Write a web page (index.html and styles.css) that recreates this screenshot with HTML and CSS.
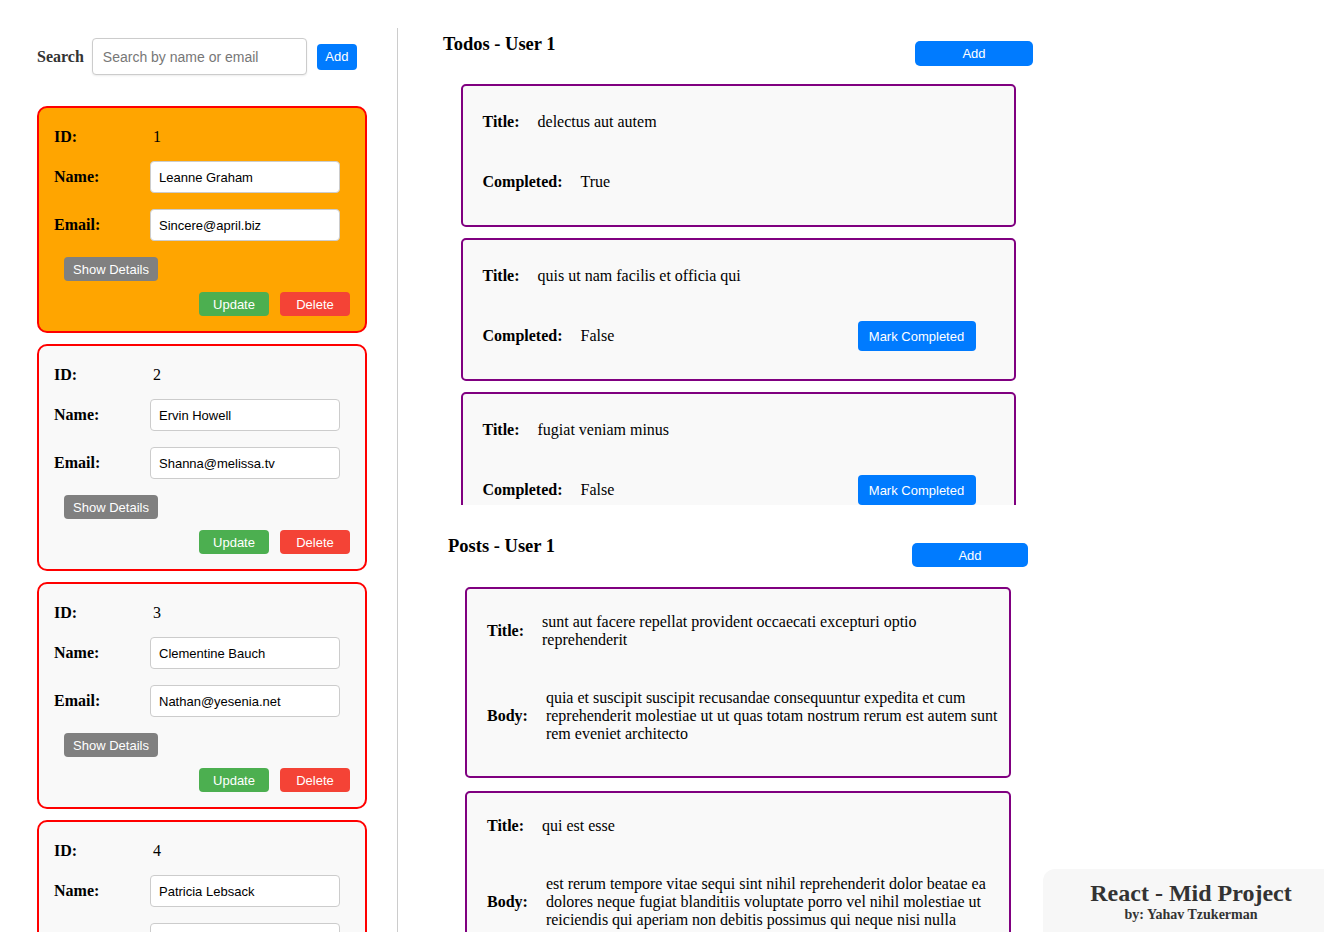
FILE: index.html
```html
<!DOCTYPE html>
<html lang="en">
<head>
<meta charset="utf-8">
<title>React - Mid Project</title>
<link rel="stylesheet" href="styles.css">
</head>
<body>
<div class="left">
  <div class="search-row">
    <span class="search-label">Search</span>
    <input class="search-input" type="text" placeholder="Search by name or email">
    <button class="btn btn-blue btn-add-small">Add</button>
  </div>
  <div class="users">
    <div class="user-card active">
      <div class="row row-id"><span class="lbl">ID:</span><span class="val">1</span></div>
      <div class="row row-field"><span class="lbl">Name:</span><input class="field" type="text" value="Leanne Graham"></div>
      <div class="row row-field"><span class="lbl">Email:</span><input class="field" type="text" value="Sincere@april.biz"></div>
      <button class="btn btn-gray btn-details">Show Details</button>
      <div class="actions"><button class="btn btn-green">Update</button><button class="btn btn-red">Delete</button></div>
    </div>
    <div class="user-card">
      <div class="row row-id"><span class="lbl">ID:</span><span class="val">2</span></div>
      <div class="row row-field"><span class="lbl">Name:</span><input class="field" type="text" value="Ervin Howell"></div>
      <div class="row row-field"><span class="lbl">Email:</span><input class="field" type="text" value="Shanna@melissa.tv"></div>
      <button class="btn btn-gray btn-details">Show Details</button>
      <div class="actions"><button class="btn btn-green">Update</button><button class="btn btn-red">Delete</button></div>
    </div>
    <div class="user-card">
      <div class="row row-id"><span class="lbl">ID:</span><span class="val">3</span></div>
      <div class="row row-field"><span class="lbl">Name:</span><input class="field" type="text" value="Clementine Bauch"></div>
      <div class="row row-field"><span class="lbl">Email:</span><input class="field" type="text" value="Nathan@yesenia.net"></div>
      <button class="btn btn-gray btn-details">Show Details</button>
      <div class="actions"><button class="btn btn-green">Update</button><button class="btn btn-red">Delete</button></div>
    </div>
    <div class="user-card">
      <div class="row row-id"><span class="lbl">ID:</span><span class="val">4</span></div>
      <div class="row row-field"><span class="lbl">Name:</span><input class="field" type="text" value="Patricia Lebsack"></div>
      <div class="row row-field"><span class="lbl">Email:</span><input class="field" type="text" value="Julianne.OConner@kory.org"></div>
      <button class="btn btn-gray btn-details">Show Details</button>
      <div class="actions"><button class="btn btn-green">Update</button><button class="btn btn-red">Delete</button></div>
    </div>
  </div>
</div>

<div class="right">
  <section class="todos">
    <div class="sec-head">
      <h2 class="sec-title">Todos - User 1</h2>
      <button class="btn btn-blue btn-add-todo">Add</button>
    </div>
    <div class="todo-list">
      <div class="todo-card">
        <div class="todo-row"><span class="lbl2">Title:</span><span class="v2">delectus aut autem</span></div>
        <div class="todo-row"><span class="lbl2">Completed:</span><span class="v2">True</span></div>
      </div>
      <div class="todo-card">
        <div class="todo-row"><span class="lbl2">Title:</span><span class="v2">quis ut nam facilis et officia qui</span></div>
        <div class="todo-row"><span class="lbl2">Completed:</span><span class="v2">False</span><button class="btn btn-blue btn-mark">Mark Completed</button></div>
      </div>
      <div class="todo-card">
        <div class="todo-row"><span class="lbl2">Title:</span><span class="v2">fugiat veniam minus</span></div>
        <div class="todo-row"><span class="lbl2">Completed:</span><span class="v2">False</span><button class="btn btn-blue btn-mark">Mark Completed</button></div>
      </div>
    </div>
  </section>

  <section class="posts">
    <div class="sec-head">
      <h2 class="sec-title">Posts - User 1</h2>
      <button class="btn btn-blue btn-add-post">Add</button>
    </div>
    <div class="post-list">
      <div class="post-card">
        <div class="post-row"><span class="lbl3">Title:</span><span class="v3">sunt aut facere repellat provident occaecati excepturi optio reprehenderit</span></div>
        <div class="post-row"><span class="lbl3">Body:</span><span class="v3">quia et suscipit suscipit recusandae consequuntur expedita et cum reprehenderit molestiae ut ut quas totam nostrum rerum est autem sunt rem eveniet architecto</span></div>
      </div>
      <div class="post-card">
        <div class="post-row"><span class="lbl3">Title:</span><span class="v3">qui est esse</span></div>
        <div class="post-row"><span class="lbl3">Body:</span><span class="v3">est rerum tempore vitae sequi sint nihil reprehenderit dolor beatae ea dolores neque fugiat blanditiis voluptate porro vel nihil molestiae ut reiciendis qui aperiam non debitis possimus qui neque nisi nulla</span></div>
      </div>
    </div>
  </section>
</div>

<footer class="credit">
  <div class="credit-title">React - Mid Project</div>
  <div class="credit-sub">by: Yahav Tzukerman</div>
</footer>
</body>
</html>
```

FILE: styles.css
```css
* { box-sizing: border-box; }
html, body { margin: 0; padding: 0; }
body {
  display: flex;
  height: 100vh;
  overflow: hidden;
  font-family: "Liberation Serif", "Times New Roman", serif;
  font-size: 16px;
  color: #000;
  background: #fff;
}

.btn {
  border: none;
  font-family: "Liberation Sans", Arial, sans-serif;
  font-size: 13px;
  color: #fff;
  border-radius: 4px;
  padding: 0;
  cursor: pointer;
}
.btn-blue { background: #007bff; }
.btn-gray { background: #808080; }
.btn-green { background: #4caf50; }
.btn-red { background: #f44336; }

/* Left panel */
.left {
  flex: 0 0 398px;
  width: 398px;
  margin-top: 28px;
  height: calc(100vh - 28px);
  overflow: hidden;
  border-right: 1px solid #ccc;
  padding: 10px 30px 0 37px;
}
.search-row {
  display: flex;
  align-items: center;
  height: 37px;
}
.search-label {
  font-weight: bold;
  color: #333;
  margin-right: 8px;
}
.search-input {
  width: 215px;
  height: 37px;
  border: 1px solid #ccc;
  border-radius: 4px;
  padding: 0 10px;
  font-family: "Liberation Sans", Arial, sans-serif;
  font-size: 14px;
  box-shadow: 0 1px 2px rgba(0,0,0,0.08);
}
.search-input::placeholder { color: #777; }
.btn-add-small {
  margin-left: 10px;
  width: 40px;
  height: 26px;
}

.users {
  margin-top: 31px;
  display: flex;
  flex-direction: column;
  gap: 11px;
}
.user-card {
  width: 330px;
  border: 2px solid #ff0000;
  border-radius: 10px;
  background: #f9f9f9;
  padding: 17px 15px 15px;
  display: flex;
  flex-direction: column;
}
.user-card.active { background: #ffa500; }
.row { display: flex; }
.row-id { height: 24px; align-items: center; }
.val { margin-left: 3px; }
.row-field { align-items: baseline; margin-top: 12px; height: 32px; }
.row-field + .row-field { margin-top: 16px; }
.lbl {
  width: 96px;
  flex: 0 0 96px;
  font-weight: bold;
}
.field {
  width: 190px;
  height: 32px;
  border: 1px solid #ccc;
  border-radius: 4px;
  padding: 0 8px;
  font-family: "Liberation Sans", Arial, sans-serif;
  font-size: 13px;
  color: #000;
  background: #fff;
}
.btn-details {
  align-self: flex-start;
  margin: 16px 0 0 10px;
  width: 94px;
  height: 24px;
}
.actions {
  display: flex;
  justify-content: flex-end;
  gap: 11px;
  margin-top: 11px;
}
.actions .btn { width: 70px; height: 24px; }

/* Right panel */
.right {
  flex: 1;
  display: flex;
  flex-direction: column;
}
.sec-head {
  display: flex;
  justify-content: space-between;
  align-items: flex-start;
}
.sec-title {
  margin: 0;
  font-size: 18.5px;
  line-height: 22px;
  font-weight: bold;
}
.todos {
  margin: 33px 0 0 45px;
  width: 590px;
}
.btn-add-todo {
  margin-top: 8px;
  width: 118px;
  height: 25px;
  border-radius: 5px;
}
.todo-list {
  margin-top: 18px;
  height: 421px;
  overflow: hidden;
  display: flex;
  flex-direction: column;
  align-items: center;
  gap: 11px;
}
.todo-card {
  flex: 0 0 auto;
  width: 555px;
  border: 2px solid #800080;
  border-radius: 5px;
  background: #f9f9f9;
  padding: 21px 20px 28px;
  display: flex;
  flex-direction: column;
  gap: 30px;
}
.todo-row {
  display: flex;
  align-items: center;
  min-height: 30px;
}
.lbl2 { font-weight: bold; margin-right: 18px; }
.btn-mark {
  margin-left: auto;
  margin-right: 18px;
  width: 118px;
  height: 30px;
}

.posts {
  margin: 30px 0 0 50px;
  width: 580px;
}
.btn-add-post {
  margin-top: 8px;
  width: 116px;
  height: 24px;
  border-radius: 5px;
}
.post-list {
  margin-top: 20px;
  display: flex;
  flex-direction: column;
  align-items: center;
  gap: 13px;
}
.post-card {
  flex: 0 0 auto;
  width: 546px;
  border: 2px solid #800080;
  border-radius: 5px;
  background: #f9f9f9;
  padding: 24px 8px 33px 20px;
  display: flex;
  flex-direction: column;
  gap: 40px;
}
.post-row {
  display: flex;
  align-items: center;
}
.lbl3 { font-weight: bold; margin-right: 18px; flex: 0 0 auto; }
.v3 { flex: 1; line-height: 18px; }

/* Credit box */
.credit {
  position: fixed;
  right: 0;
  bottom: 0;
  width: 281px;
  height: 63px;
  background: #f7f7f7;
  border-top-left-radius: 12px;
  padding: 11px 0 0 15px;
  text-align: center;
  color: #333;
  font-weight: bold;
}
.credit-title { font-size: 24px; line-height: 27px; }
.credit-sub { font-size: 14px; line-height: 16px; }
```
